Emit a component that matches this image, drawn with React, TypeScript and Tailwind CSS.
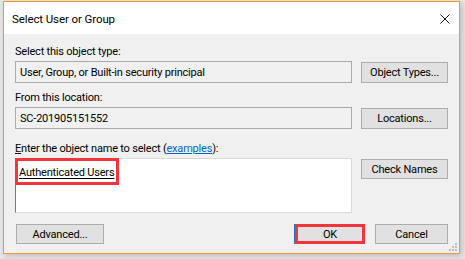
import React from "react";

function WinButton({ label, className = "" }: { label: React.ReactNode; className?: string }) {
    return (
        <div
            className={`flex items-center justify-center bg-[#e1e1e1] border border-[#adadad] text-black ${className}`}
        >
            {label}
        </div>
    );
}

function ReadOnlyBox({ text }: { text: string }) {
    return (
        <div className="w-[337px] h-[22px] border border-[#a9a9a9] bg-[#f0f0f0] flex items-center pl-[4px] text-black">
            {text}
        </div>
    );
}

export default function App() {
    return (
        <div
            className="w-[465px] h-[259px] bg-[#e6e6e6] pl-[3px] pt-[1px] text-[11px] tracking-[-0.2px] leading-[15px]"
            style={{ fontFamily: 'Roboto, "Noto Sans", sans-serif' }}
        >
            <div className="relative w-[457px] h-[253px] border border-[#f3962c] bg-[#f0f0f0] flex flex-col shadow-[2px_2px_6px_rgba(0,0,0,0.18)]">
                {/* title bar */}
                <div className="h-[32px] bg-white flex items-center justify-between pl-[8px] pr-[9px] pt-[2px] shrink-0">
                    <span className="text-[11.5px] tracking-[-0.1px] text-black">Select User or Group</span>
                    <svg width="10" height="10" viewBox="0 0 10 10" className="-mt-[1px]">
                        <path d="M0.5 0.5 L9.5 9.5 M9.5 0.5 L0.5 9.5" stroke="#111" strokeWidth="1" />
                    </svg>
                </div>

                {/* body */}
                <div className="flex flex-col pl-[11px] pr-[10px] pt-[10px]">
                    <div className="h-[15px]">Select this object type:</div>
                    <div className="flex mt-[2px]">
                        <ReadOnlyBox text="User, Group, or Built-in security principal" />
                        <WinButton label="Object Types..." className="ml-[9px] mt-[1px] w-[87px] h-[21px]" />
                    </div>

                    <div className="h-[15px] mt-[7px]">From this location:</div>
                    <div className="flex mt-[2px]">
                        <ReadOnlyBox text="SC-201905151552" />
                        <WinButton label="Locations..." className="ml-[9px] mt-[1px] w-[87px] h-[21px]" />
                    </div>

                    <div className="h-[15px] mt-[12px]">
                        <span className="underline">E</span>nter the object name to select (
                        <span className="text-[#0066cc] underline">examples</span>):
                    </div>
                    <div className="flex mt-[2px]">
                        <div className="relative w-[337px] h-[55px] bg-white border border-[#d9d9d9] border-l-[#7a7a7a]">
                            <div className="absolute left-[-1px] top-[-1px] w-[104px] h-[27px] border-[3px] border-[#f2353b]" />
                            <div className="pl-[3px] pt-[6px]">
                                <span className="underline decoration-[1px] underline-offset-[2px] text-black">
                                    Authenticated Users
                                </span>
                            </div>
                        </div>
                        <WinButton label="Check Names" className="ml-[9px] mt-[1px] w-[87px] h-[20px]" />
                    </div>

                    <div className="flex items-start mt-[11px]">
                        <WinButton label="Advanced..." className="ml-[1px] w-[88px] h-[20px]" />
                        <div className="ml-[190px] relative w-[71px] h-[20px] border-l border-[#1e73d6]">
                            <WinButton label="OK" className="w-full h-full border-0" />
                            <div className="absolute inset-0 border-[3px] border-[#f2353b]" />
                        </div>
                        <WinButton label="Cancel" className="ml-[10px] w-[73px] h-[20px]" />
                    </div>
                </div>

                {/* resize grip */}
                <svg width="8" height="8" viewBox="0 0 8 8" className="absolute right-[2px] bottom-[2px]">
                    <rect x="6" y="0" width="2" height="2" fill="#bdbdbd" />
                    <rect x="3" y="3" width="2" height="2" fill="#bdbdbd" />
                    <rect x="6" y="3" width="2" height="2" fill="#bdbdbd" />
                    <rect x="0" y="6" width="2" height="2" fill="#bdbdbd" />
                    <rect x="3" y="6" width="2" height="2" fill="#bdbdbd" />
                    <rect x="6" y="6" width="2" height="2" fill="#bdbdbd" />
                </svg>
            </div>
        </div>
    );
}
